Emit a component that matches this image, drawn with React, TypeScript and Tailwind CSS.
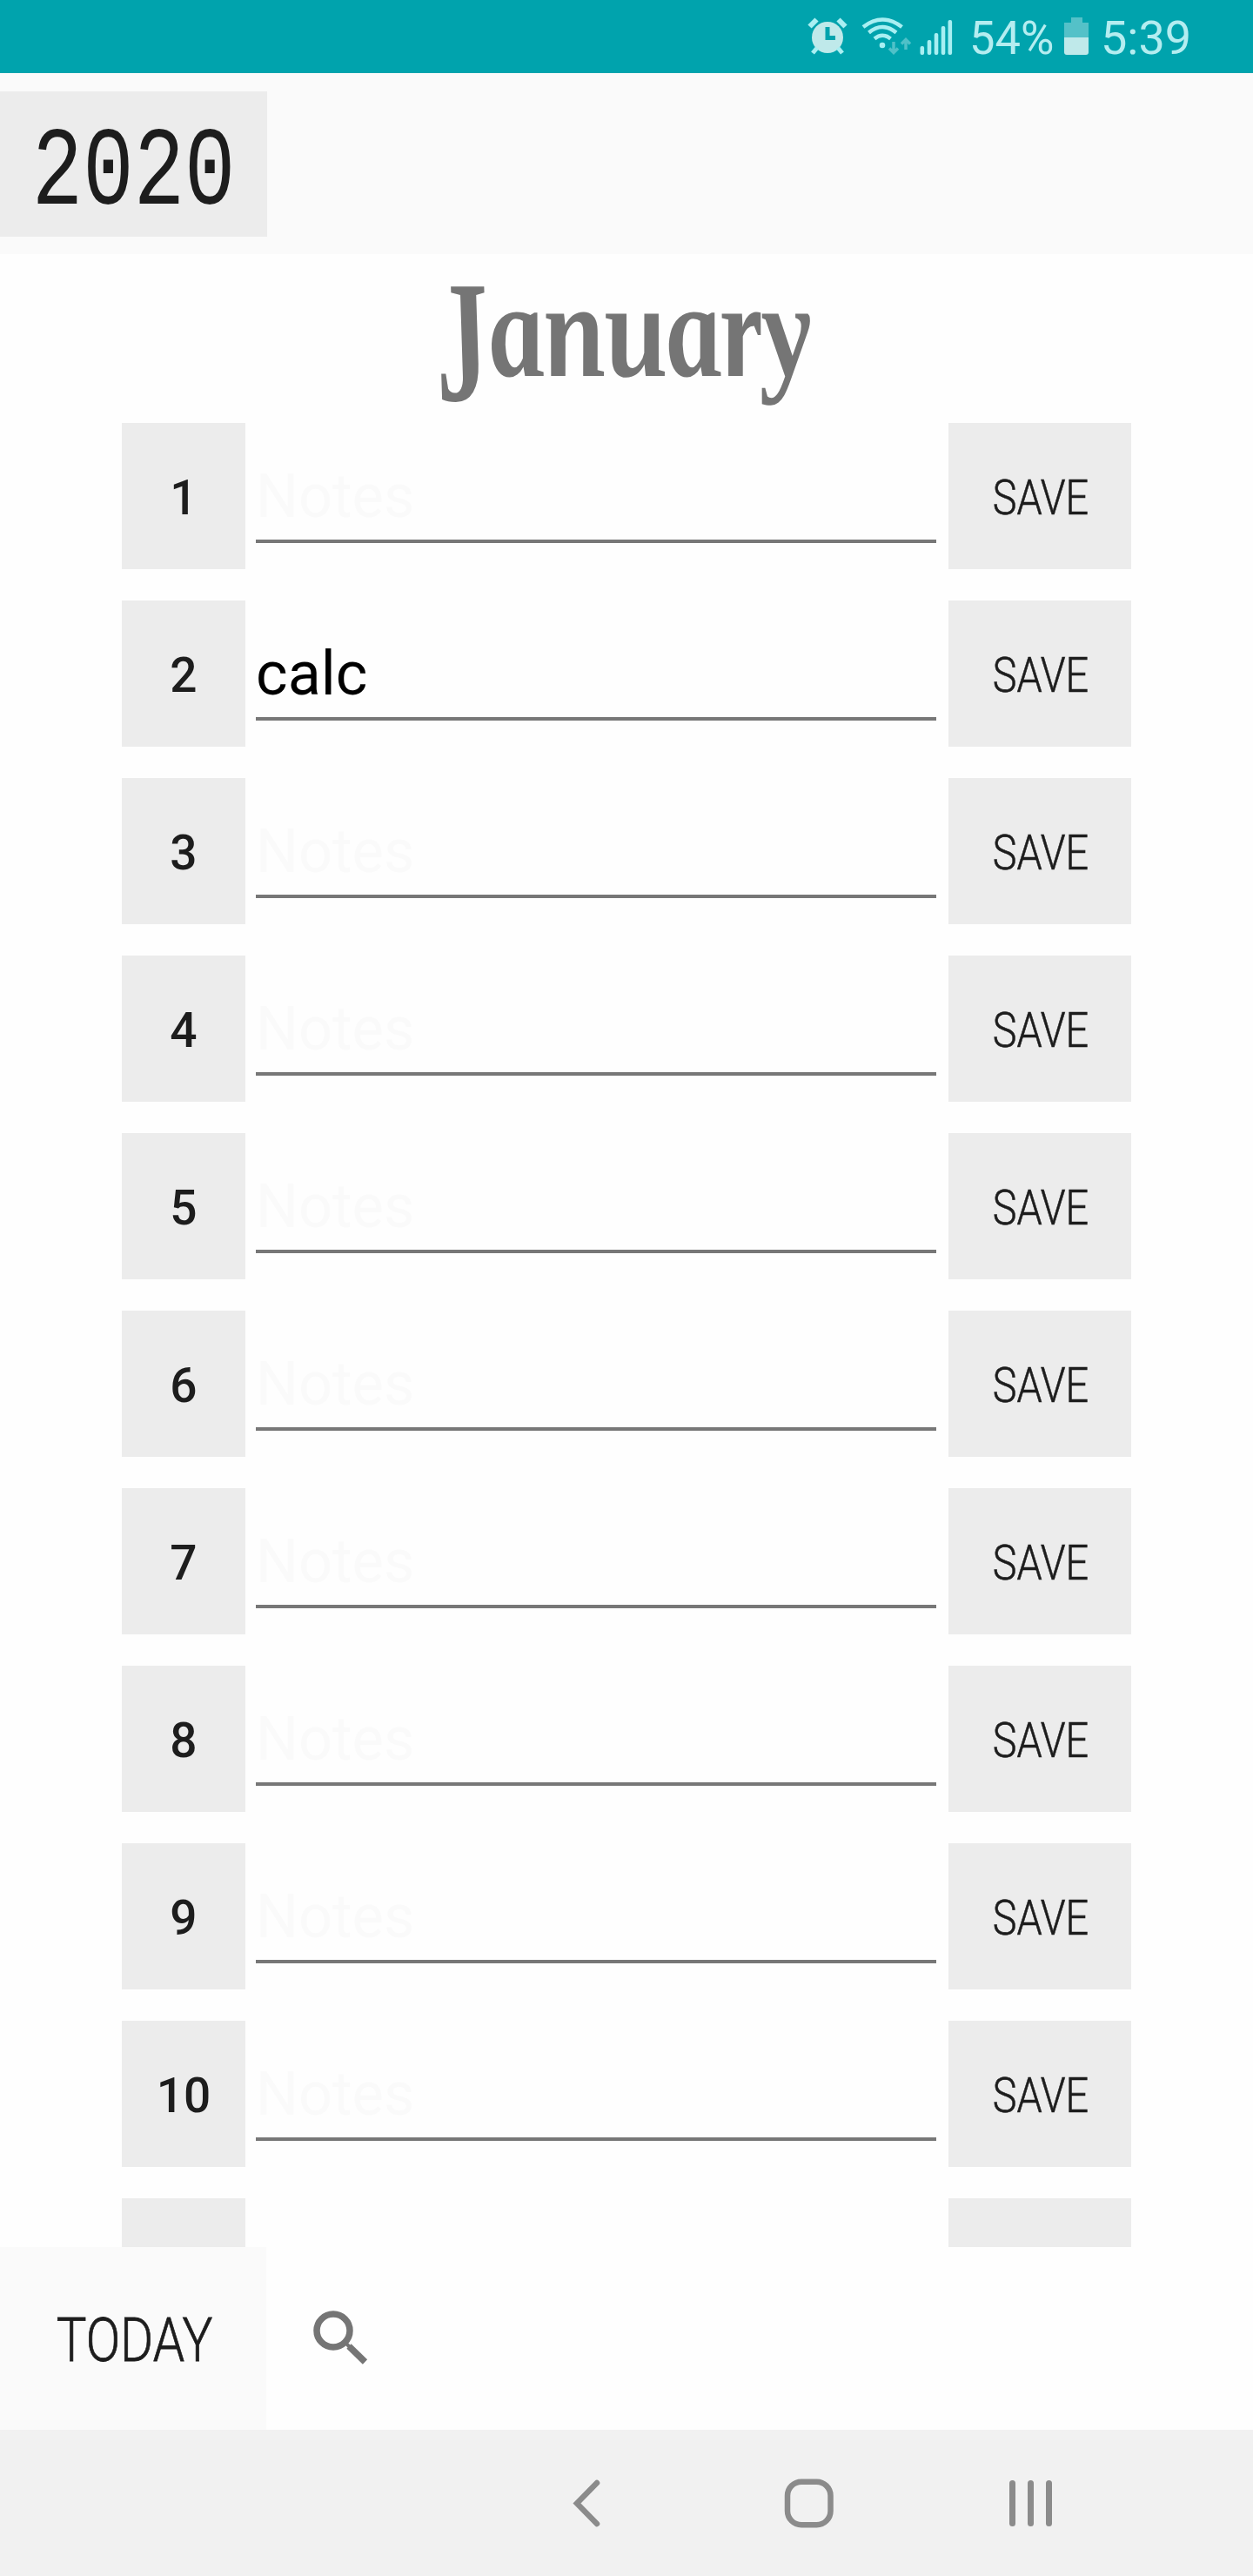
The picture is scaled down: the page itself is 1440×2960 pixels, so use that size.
const DAYS = [1, 2, 3, 4, 5, 6, 7, 8, 9, 10];
const NOTES: Record<number, string> = { 2: 'calc' };

function StatusBar() {
  return (
    <header className="flex h-[84px] shrink-0 bg-[#00a3ad] text-[#b4edf0]">
      <svg className="ml-[924px] h-[84px] w-[52px]" viewBox="924 0 52 84" fill="none">
        <circle cx="951" cy="43" r="18" fill="#bfe9ea" />
        <g stroke="#a8eff2" strokeWidth="5">
          <path d="M930.5 30.5l8-8M963.500 22.500l8 8" strokeWidth="6" />
          <path d="M939 55l-5 6M963 55l5 6" />
        </g>
        <path d="M951 31v12.500h9" stroke="#00a3ad" strokeWidth="5" />
      </svg>
      <svg className="ml-[14px] h-[84px] w-[58px]" viewBox="990 0 58 84" fill="none">
        <g stroke="#a8eff2" strokeWidth="4.500">
          <path d="M992 31Q1014 14 1036.500 31" />
          <path d="M998.500 37.500Q1014 24.500 1030 37.500" />
          <path d="M1005 44.500Q1014 37 1023.500 44.500" />
        </g>
        <circle cx="1014" cy="52" r="3.300" fill="#a8eff2" />
        <g stroke="#4fc1c8" strokeWidth="3.500">
          <path d="M1027 48v12M1022 55.500l5 5 5-5M1041 57V46M1036 50.500l5-5 5 5" />
        </g>
      </svg>
      <svg className="ml-[8px] h-[84px] w-[40px]" viewBox="1056 0 40 84">
        <g fill="#a8eff2">
          <rect x="1057.500" y="53" width="4.600" height="10" rx="2" />
          <rect x="1065.700" y="46" width="4.600" height="17" rx="2" />
          <rect x="1073.700" y="38" width="4.600" height="25" rx="2" />
          <rect x="1081.700" y="30" width="4.600" height="33" rx="2" />
          <rect x="1089.500" y="23" width="4.600" height="40" rx="2" />
        </g>
      </svg>
      <span className="ml-[18px] flex h-[84px] w-[101px] items-center text-[54px] leading-none whitespace-nowrap">
        <span className="inline-block origin-left translate-y-[2px] scale-x-[0.970]">54%</span>
      </span>
      <svg className="ml-[6px] h-[84px] w-[32px]" viewBox="1221 0 32 84">
        <path d="M1231 20h13v6h7v17h-28V26h8z" fill="#54c1c8" />
        <path d="M1223 43h28v17q0 3-3 3h-22q-3 0-3-3z" fill="#bfe9ea" />
      </svg>
      <span className="ml-[12px] flex h-[84px] w-[110px] items-center text-[54px] leading-none whitespace-nowrap">
        <span className="inline-block origin-left translate-y-[2px]">5:39</span>
      </span>
    </header>
  );
}

function DayRow({ day }: { day: number }) {
  const note = NOTES[day];
  return (
    <div className="flex h-[168px] shrink-0 pr-[140px] pl-[140px]">
      <button className="flex w-[142px] items-center justify-center bg-[#ececec] pt-1 text-[55px] font-medium text-[#1d1d1d]">
        {day}
      </button>
      <div className="ml-3 flex h-[138px] w-[782px] items-end border-b-[4px] border-[#777777] pb-[8px] text-[70px] leading-[84px]">
        {note ? (
          <span className="text-black">{note}</span>
        ) : (
          <span className="inline-block origin-left scale-x-[0.980] text-[#fafafa]">Notes</span>
        )}
      </div>
      <button className="ml-[14px] flex w-[210px] items-center justify-center bg-[#ececec] pt-1 text-[55px] font-light text-[#1d1d1d]">
        <span className="inline-block translate-x-px scale-x-[0.850] [-webkit-text-stroke:0.6px_#1d1d1d]">SAVE</span>
      </button>
    </div>
  );
}

export default function App() {
  return (
    <div className="flex h-[2960px] w-[1440px] flex-col overflow-hidden bg-[#fefefe] font-[Roboto,sans-serif]">
      <StatusBar />
      <div className="h-[208px] shrink-0 bg-[#fafafa] pt-[21px]">
        <button className="flex h-[167px] w-[307px] items-center justify-center bg-[#ececec] pt-[23px] font-['Liberation_Mono',monospace] text-[128px] leading-none text-[#1d1d1d]">
          <span className="inline-block scale-x-[0.760]">2020</span>
        </button>
      </div>
      <main className="flex h-[2290px] shrink-0 flex-col overflow-hidden">
        <h1 className="flex h-[194px] shrink-0 items-center justify-center pb-[18px] font-['Liberation_Serif',serif] text-[156px] leading-none font-bold text-[#757575] italic">
          <span className="inline-block translate-x-[-5px] scale-x-[0.810] skew-x-[10deg]">
            <span className="inline-block origin-top translate-y-[-8px] scale-y-[1.280]">J</span>anuary
          </span>
        </h1>
        <div className="flex flex-col gap-9">
          {DAYS.map((day) => (
            <DayRow key={day} day={day} />
          ))}
          <div className="flex h-[168px] shrink-0 justify-between px-[140px]">
            <div className="w-[142px] bg-[#ececec]" />
            <div className="w-[210px] bg-[#ececec]" />
          </div>
        </div>
      </main>
      <div className="flex h-[210px] shrink-0">
        <button className="flex w-[306px] items-center justify-center bg-[#fafafa] pt-[5px] text-[71px] font-light text-[#1d1d1d]">
          <span className="inline-block translate-x-px scale-x-[0.820] [-webkit-text-stroke:0.8px_#1d1d1d]">TODAY</span>
        </button>
        <svg className="mt-[69px] ml-[50px] h-[70px] w-[70px]" viewBox="356 2651 70 70" fill="none" stroke="#757575">
          <circle cx="383" cy="2678" r="19" strokeWidth="7.500" />
          <path d="M397 2692l5 5" strokeWidth="4" />
          <path d="M401 2696l18.500 18" strokeWidth="7.500" />
        </svg>
      </div>
      <nav className="flex h-[168px] shrink-0 bg-[#f1f1f1]">
        <svg className="ml-[650px] h-[168px] w-[50px]" viewBox="650 2792 50 168" fill="none">
          <path d="M686 2853l-23 23.500 23 23.500" stroke="#8b8b8b" strokeWidth="6.500" strokeLinecap="round" />
        </svg>
        <svg className="ml-[195px] h-[168px] w-[70px]" viewBox="895 2792 70 168" fill="none">
          <rect x="905" y="2851.700" width="49.500" height="49.500" rx="16" stroke="#8b8b8b" strokeWidth="6.500" />
        </svg>
        <svg className="ml-[190px] h-[168px] w-[60px]" viewBox="1155 2792 60 168" fill="#8b8b8b">
          <rect x="1160" y="2850" width="7" height="53" rx="3.500" />
          <rect x="1181" y="2850" width="7" height="53" rx="3.500" />
          <rect x="1202" y="2850" width="7" height="53" rx="3.500" />
        </svg>
      </nav>
    </div>
  );
}
